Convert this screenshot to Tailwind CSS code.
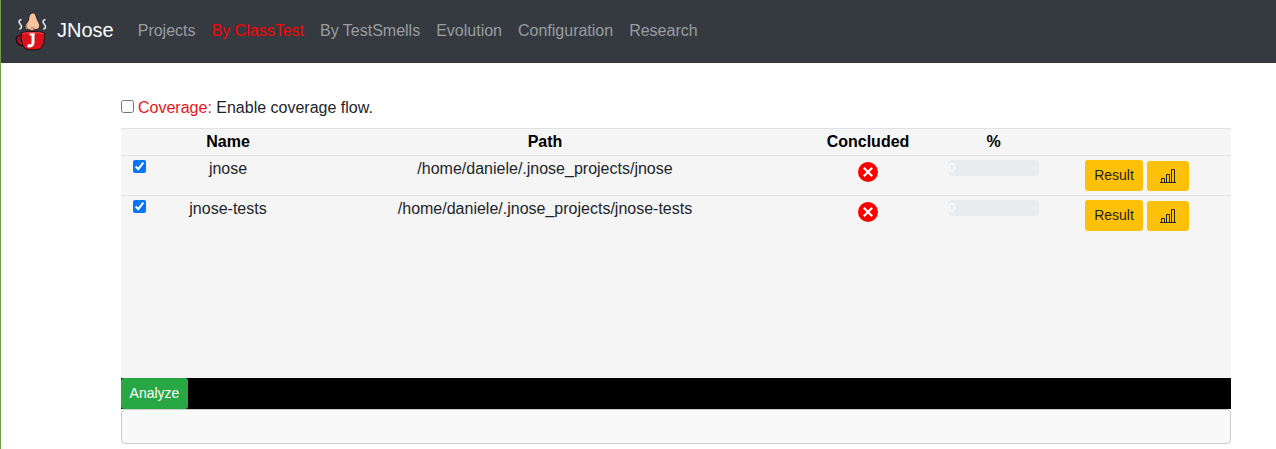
<!DOCTYPE html>
<html lang="en">
<head>
<meta charset="utf-8">
<meta name="viewport" content="width=device-width, initial-scale=1">
<title>JNose</title>
<script src="https://cdn.jsdelivr.net/npm/@tailwindcss/browser@4"></script>
</head>
<body class="min-h-screen border-l border-[#6f9b4c] bg-white font-['Liberation_Sans',Arial,sans-serif] text-base text-[#212529]">
<svg class="hidden" aria-hidden="true">
  <symbol id="fail" viewBox="0 0 20 20">
    <circle cx="10" cy="10" r="10" fill="#f00"/>
    <path d="M5.800 5.800l8.400 8.400M14.200 5.800l-8.400 8.400" stroke="#fff" stroke-width="2.200"/>
  </symbol>
  <symbol id="chart" viewBox="0 0 16 16">
    <path d="M0 14.500h16M1.500 14.500v-4h3v4M6.500 14.500v-8h3v8M11.500 14.500v-13h3v13" fill="none" stroke="#212529"/>
  </symbol>
</svg>

<nav class="flex items-center bg-[#343a40] px-4 pt-[11px] pb-3">
  <a href="#" class="mr-6 flex items-center gap-2 text-xl text-white">
    <svg class="h-10 w-8 overflow-visible" viewBox="0 0 32 40" aria-hidden="true">
      <path d="M4.500 8.500c-3 .5-3 3-1.200 4.800s1.500 4-1 5M28.500 8.500c-3 .5-3 3-1.200 4.800s1.500 4-1 5" fill="none" stroke="#e4e8ec" stroke-width="1.600"/>
      <path d="M12.500 4c1.500-2.500 5-3 6.200 0 .8 3 1.800 5 3.300 8 1.500 3.500 0 6.500-3 6.500-1.500 0-2.500 1-4.500 1-1.500 0-2-1-3.500-1-3 0-3.500-3-2.300-5 1.300-2.200 2.800-3 3-5.300 0-1.500.2-3 .8-4.200z" fill="#f6c29f" stroke="#30211c"/>
      <path d="M10.500 13.500c-1.500 1-1.500 3.500.5 3.800M13.500 17.800c1-1.500 3.500-1.200 4 .2" fill="none" stroke="#a35c42"/>
      <path d="M5 26H2.500c-3.500 0-3 7 3.500 8" fill="none" stroke="#210708" stroke-width="3.400"/>
      <path d="M5 26H2.500c-3 0-2.300 6 3.500 7.300" fill="none" stroke="#c51620" stroke-width="1.600"/>
      <path d="M4.300 21.800c5-1.500 18-1.500 23 0 .6 7-.3 11.500-3.800 15.700-3 1.800-12.400 1.800-15.400 0-3.500-4.200-4.200-8.700-3.800-15.700z" fill="#e0141d" stroke="#28090a"/>
      <path d="M5.500 25h21M5.500 29h21M7 33h18" stroke="#b81019" stroke-dasharray="2 1"/>
      <path d="M5.500 22.500c5-1.200 16-1.200 21 0" fill="none" stroke="#f04a4b"/>
      <path d="M16 22.500V31.500c0 3.500-2.500 4-5.500 3" fill="none" stroke="#fff" stroke-width="3"/>
      <path d="M12.500 23.500H17.500" stroke="#fff" stroke-width="2"/>
    </svg>
    <span class="pb-0.5">JNose</span>
  </a>
  <div class="flex gap-4 text-[#9a9da0]">
    <a href="#">Projects</a>
    <a href="#" class="text-[#f00]">By ClassTest</a>
    <a href="#">By TestSmells</a>
    <a href="#">Evolution</a>
    <a href="#">Configuration</a>
    <a href="#">Research</a>
  </div>
</nav>

<main class="mr-[45px] ml-[120px] pt-8">
  <label class="mb-2 flex items-start gap-1 pt-px leading-6"><input type="checkbox" class="mt-1 size-[13px]"><span><span class="text-[#e8141c]">Coverage:</span> Enable coverage flow.</span></label>

  <div class="min-h-[250px] bg-[#f5f5f5]">
    <table class="w-full table-fixed border-separate border-spacing-0 text-center leading-6">
      <colgroup>
        <col class="w-[37px]"><col class="w-[140px]"><col><col class="w-[152px]"><col class="w-[99px]"><col class="w-[188px]">
      </colgroup>
      <thead>
        <tr class="text-black *:border-t *:border-[#dee2e6] *:py-px">
          <td></td><th>Name</th><th>Path</th><th>Concluded</th><th>%</th><td></td>
        </tr>
      </thead>
      <tbody>
        <tr class="align-top *:h-10 *:border-t *:border-[#dee2e6] *:pt-px">
          <td><input type="checkbox" checked aria-label="Select jnose" class="mx-auto mt-[3px] block size-[13px] accent-[#0075ff]"></td>
          <td>jnose</td>
          <td>/home/daniele/.jnose_projects/jnose</td>
          <td><svg class="mx-auto mt-[5px] size-5" role="img" aria-label="Not concluded"><use href="#fail"/></svg></td>
          <td><div class="mx-1 mt-[3px] h-4 overflow-hidden rounded bg-[#e9ecef] text-left text-[13px] leading-4 text-white">0</div></td>
          <td><div class="mt-[3px] flex items-end justify-center gap-1">
            <button type="button" class="h-[31px] w-[58px] rounded-[3px] bg-[#ffc107] pb-0.5 text-sm">Result</button>
            <button type="button" aria-label="Chart" class="flex h-[30px] w-[42px] items-center justify-center rounded-[3px] bg-[#ffc107]"><svg class="size-4"><use href="#chart"/></svg></button>
          </div></td>
        </tr>
        <tr class="align-top *:h-10 *:border-t *:border-[#dee2e6] *:pt-px">
          <td><input type="checkbox" checked aria-label="Select jnose-tests" class="mx-auto mt-[3px] block size-[13px] accent-[#0075ff]"></td>
          <td>jnose-tests</td>
          <td>/home/daniele/.jnose_projects/jnose-tests</td>
          <td><svg class="mx-auto mt-[5px] size-5" role="img" aria-label="Not concluded"><use href="#fail"/></svg></td>
          <td><div class="mx-1 mt-[3px] h-4 overflow-hidden rounded bg-[#e9ecef] text-left text-[13px] leading-4 text-white">0</div></td>
          <td><div class="mt-[3px] flex items-end justify-center gap-1">
            <button type="button" class="h-[31px] w-[58px] rounded-[3px] bg-[#ffc107] pb-0.5 text-sm">Result</button>
            <button type="button" aria-label="Chart" class="flex h-[30px] w-[42px] items-center justify-center rounded-[3px] bg-[#ffc107]"><svg class="size-4"><use href="#chart"/></svg></button>
          </div></td>
        </tr>
      </tbody>
    </table>
  </div>
  <div class="flex bg-black">
    <button type="button" class="h-[31px] w-[67px] rounded-[3px] bg-[#28a745] pb-0.5 text-sm text-white">Analyze</button>
  </div>
  <div class="h-[35px] rounded border border-[#ccc] bg-[#f9f9f9]"></div>
</main>
</body>
</html>
